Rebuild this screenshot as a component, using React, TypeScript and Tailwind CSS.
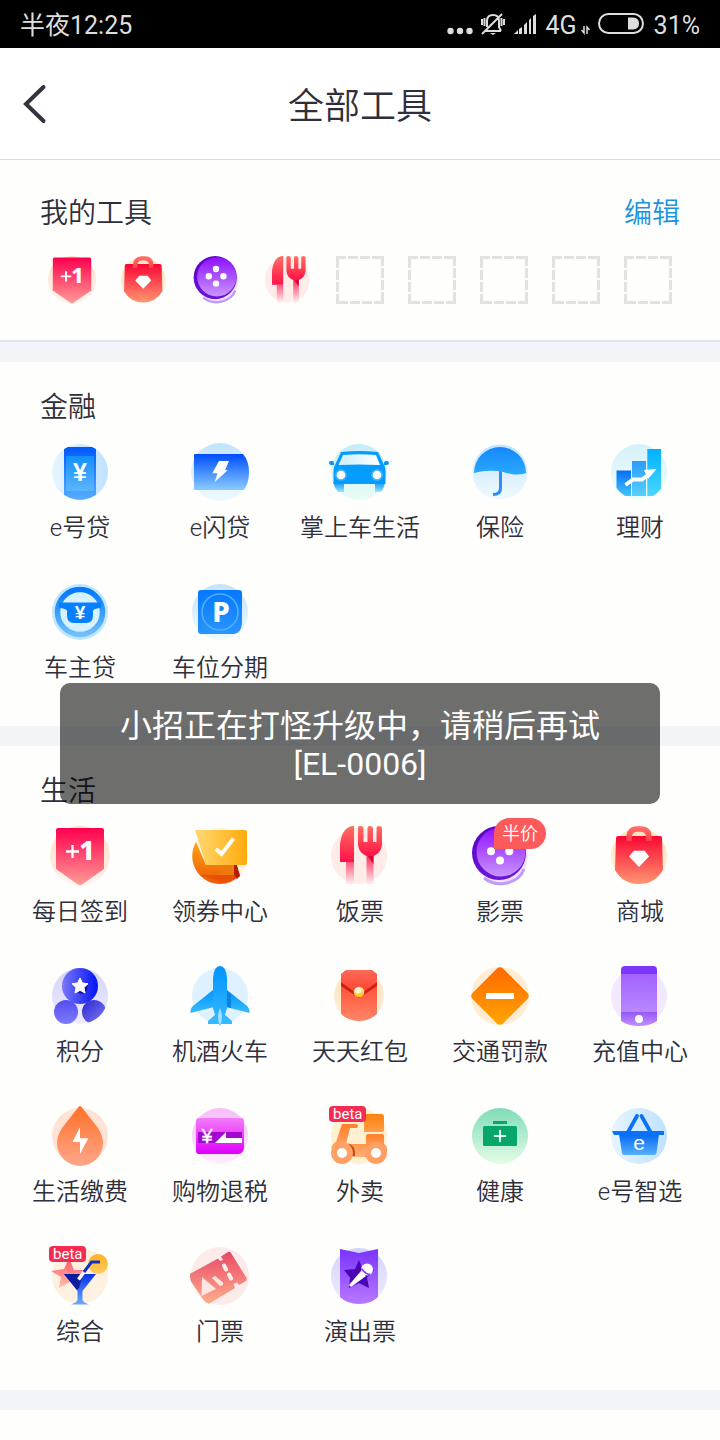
import React from 'react';

type IconName =
  | 'phoneLoan' | 'flashLoan' | 'car' | 'umbrella' | 'chart' | 'wheel' | 'parking'
  | 'sign' | 'coupon' | 'food' | 'movie' | 'bag' | 'points' | 'plane' | 'redPacket'
  | 'fine' | 'recharge' | 'drop' | 'refund' | 'scooter' | 'health' | 'basket'
  | 'cocktail' | 'ticket' | 'show';

interface Tool {
  icon: IconName;
  label: string;
  beta?: boolean;
  tag?: string;
}

const financeTools: Tool[] = [
  { icon: 'phoneLoan', label: 'e号贷' },
  { icon: 'flashLoan', label: 'e闪贷' },
  { icon: 'car', label: '掌上车生活' },
  { icon: 'umbrella', label: '保险' },
  { icon: 'chart', label: '理财' },
  { icon: 'wheel', label: '车主贷' },
  { icon: 'parking', label: '车位分期' },
];

const lifeTools: Tool[] = [
  { icon: 'sign', label: '每日签到' },
  { icon: 'coupon', label: '领券中心' },
  { icon: 'food', label: '饭票' },
  { icon: 'movie', label: '影票', tag: '半价' },
  { icon: 'bag', label: '商城' },
  { icon: 'points', label: '积分' },
  { icon: 'plane', label: '机酒火车' },
  { icon: 'redPacket', label: '天天红包' },
  { icon: 'fine', label: '交通罚款' },
  { icon: 'recharge', label: '充值中心' },
  { icon: 'drop', label: '生活缴费' },
  { icon: 'refund', label: '购物退税' },
  { icon: 'scooter', label: '外卖', beta: true },
  { icon: 'health', label: '健康' },
  { icon: 'basket', label: 'e号智选' },
  { icon: 'cocktail', label: '综合', beta: true },
  { icon: 'ticket', label: '门票' },
  { icon: 'show', label: '演出票' },
];

const myTools: Tool[] = [
  { icon: 'sign', label: '每日签到' },
  { icon: 'bag', label: '商城' },
  { icon: 'movie', label: '影票' },
  { icon: 'food', label: '饭票' },
];

const EMPTY_SLOTS = 5;

// id, from, to, direction (v = top to bottom, h = left to right, d = diagonal)
const gradients: [string, string, string, 'v' | 'h' | 'd'][] = [
  ['paleBlue', '#e6f5ff', '#bfe2ff', 'h'],
  ['paleBlueV', '#c3e4fd', '#f0faff', 'v'],
  ['paleCyan', '#c4ecfb', '#e9fdf6', 'v'],
  ['blueFade', '#0057ff', '#62baff', 'v'],
  ['screen', '#1290fb', '#5cb4fd', 'v'],
  ['blueCard', '#004dff', '#8accff', 'v'],
  ['tyre', '#0596fa', '#9fe6fb', 'v'],
  ['windshield', '#cbeefe', '#ffffff', 'h'],
  ['dome', '#1688fb', '#29a9ff', 'v'],
  ['bar1', '#0a6cf2', '#3fc8ff', 'v'],
  ['bar2', '#2b9dfb', '#58cfff', 'v'],
  ['bar3', '#00b2ff', '#4ad6ff', 'v'],
  ['ring', '#0078ff', '#71c0fb', 'v'],
  ['park', '#0478ff', '#2b94ff', 'v'],
  ['peach', '#ffdcc0', '#fff5f2', 'v'],
  ['badge', '#ff004e', '#ff9d97', 'v'],
  ['couponBase', '#ffa412', '#ee5a06', 'v'],
  ['couponCard', '#ffd873', '#ffab0a', 'h'],
  ['blade', '#ff6f61', '#ff1249', 'v'],
  ['handle', '#ff1f55', '#fff0ee', 'v'],
  ['violetDark', '#5a05c4', '#6a14d8', 'v'],
  ['violetDisc', '#8f10ff', '#c994ff', 'v'],
  ['bagBody', '#fa0634', '#ff9670', 'v'],
  ['bagArch', '#ff6a67', '#fb3f4b', 'v'],
  ['sand', '#ffe3bb', '#fff1dd', 'v'],
  ['ballBig', '#7b78f6', '#0212f4', 'h'],
  ['ballSmall', '#544df0', '#7f7bff', 'v'],
  ['ballCut', '#2c27c9', '#7f7bff', 'd'],
  ['paleIndigo', '#d3d3fb', '#eeedff', 'v'],
  ['planeFill', '#0093ff', '#37bcff', 'v'],
  ['packet', '#ff3a25', '#ff8b6b', 'v'],
  ['flap', '#ff6a57', '#fb4231', 'v'],
  ['gold', '#ffe9a0', '#ffbe12', 'v'],
  ['diamond', '#ff6a00', '#ffa400', 'v'],
  ['cellTop', '#a262ff', '#b888ff', 'v'],
  ['cellFoot', '#9656f8', '#c290ff', 'v'],
  ['dropFill', '#fe7027', '#ffa78a', 'v'],
  ['palePink', '#f7bdfb', '#fdeefe', 'v'],
  ['magenta', '#f57cfb', '#dd00fa', 'v'],
  ['crate', '#ff8209', '#ff9d4c', 'v'],
  ['scoot', '#ff7f2a', '#ffb178', 'v'],
  ['green', '#7fdcb8', '#e6fce6', 'v'],
  ['basketFill', '#0568f4', '#55b0ff', 'v'],
  ['starFill', '#ff5468', '#ffc2ac', 'v'],
  ['orange', '#ffb21f', '#ffcb62', 'v'],
  ['glass', '#0a31e8', '#6aaaff', 'v'],
  ['ticketFill', '#e84a66', '#ffb08e', 'v'],
  ['flag', '#7a34fb', '#b878ff', 'v'],
];

const IconDefs = () => (
  <svg width="0" height="0" className="absolute" aria-hidden="true">
    <defs>
      {gradients.map(([id, from, to, dir]) => (
        <linearGradient key={id} id={id} x1="0" y1="0" x2={dir === 'v' ? '0' : '1'} y2={dir === 'h' ? '0' : '1'}>
          <stop stopColor={from} />
          <stop offset="1" stopColor={to} />
        </linearGradient>
      ))}
      <clipPath id="disc"><circle cx="30" cy="30" r="28" /></clipPath>
      <clipPath id="discPacket"><circle cx="29" cy="28" r="27" /></clipPath>
      <clipPath id="discBig"><circle cx="30" cy="30" r="30" /></clipPath>
    </defs>
  </svg>
);

const glyphFont = "'Noto Sans', sans-serif";
const yenFont = "'Liberation Sans', sans-serif";

const icons: Record<IconName, React.ReactNode> = {
  phoneLoan: (
    <>
      <circle cx="30" cy="30" r="28" fill="url(#paleBlue)" />
      <g clipPath="url(#disc)">
        <rect x="14" y="5" width="32" height="60" rx="3" fill="url(#blueFade)" />
        <rect x="16" y="14" width="28" height="35" fill="url(#screen)" />
      </g>
      <text x="30" y="39" fontFamily={yenFont} fontSize="25" fontWeight="700" fill="#fff" textAnchor="middle">¥</text>
    </>
  ),
  flashLoan: (
    <>
      <circle cx="30" cy="30" r="29" fill="url(#paleBlueV)" />
      <path d="M5 12H53Q59 19 59 30T54 48H5Q4 48 4 47V13Q4 12 5 12Z" fill="url(#blueCard)" />
      <path d="M29 19H39L35 28.3H37.7L24.5 40.3L27.5 31.3H22.3Z" fill="#fff" />
    </>
  ),
  car: (
    <>
      <circle cx="29" cy="30" r="28" fill="url(#paleCyan)" />
      <path d="M3.5 40H14V50H8Q5 47 3.5 41ZM45 40H55Q54 47 51 50H45Z" fill="url(#tyre)" />
      <path d="M-1 21Q-1 19 1 19H2Q4 19 4 21V23H1Q-1 23 -1 21ZM54 21Q54 19 56 19H57Q59 19 59 21T57 23H54Z" fill="#0596fa" />
      <path d="M11 10Q29 8 48 10L54 23Q55.5 25 55.5 30V42H3.5V30Q3.5 25 5 23Z" fill="#059cfd" />
      <path d="M13 13Q29 11.5 46 13L50 23Q29 22 8.5 23Z" fill="url(#windshield)" />
      <circle cx="11" cy="33" r="6" fill="#5cc0ff" opacity=".6" />
      <circle cx="47" cy="33" r="6" fill="#5cc0ff" opacity=".6" />
      <circle cx="11" cy="33" r="4.3" fill="#fff" />
      <circle cx="47" cy="33" r="4.3" fill="#fff" />
    </>
  ),
  umbrella: (
    <>
      <circle cx="30" cy="30" r="27.5" fill="url(#paleBlueV)" />
      <path d="M30.5 28V46Q30.5 52.5 23 52.5" fill="none" stroke="#2d8cf5" strokeWidth="3" />
      <path d="M4 31A26 26 0 0 1 56 31Q51 33 44 32.5Q38 31.5 33 30Q27 28.5 20 28.7Q10 29 4 31Z" fill="url(#dome)" />
    </>
  ),
  chart: (
    <>
      <circle cx="29" cy="30" r="28" fill="url(#paleCyan)" opacity=".7" />
      <path d="M6.5 28.5H21V54H15Q9 50 6.5 46Z" fill="url(#bar1)" />
      <path d="M22 19H36V54H22Z" fill="url(#bar2)" />
      <path d="M37.3 7H51V47Q47 52 43 54H37.3Z" fill="url(#bar3)" />
      <path d="M15.5 43L23 37.5H32L41 31" fill="none" stroke="#fff" strokeWidth="4" />
      <path d="M34 28L46.5 27L38 37Z" fill="#fff" />
    </>
  ),
  wheel: (
    <>
      <circle cx="30" cy="30" r="28" fill="#c2e7fc" />
      <circle cx="30" cy="30" r="22.5" fill="#d6f1ff" stroke="url(#ring)" strokeWidth="5.5" />
      <path d="M9 20.5H51V26Q45 26 43 28.5V33Q43 41 36 41H24Q17 41 17 33V28.5Q15 26 9 26Z" fill="#0680ff" />
      <text x="30" y="37" fontFamily={yenFont} fontSize="19" fontWeight="700" fill="#fff" textAnchor="middle">¥</text>
    </>
  ),
  parking: (
    <>
      <circle cx="30" cy="30" r="28" fill="url(#paleBlueV)" />
      <path d="M11 8H49Q52 8 52 11V42Q51 51 44 52H11Q8 52 8 49V11Q8 8 11 8Z" fill="url(#park)" />
      <circle cx="30" cy="30" r="18" fill="none" stroke="#4fb0fc" strokeWidth="1.6" />
      <text x="31" y="40" fontFamily={glyphFont} fontSize="28" fontWeight="800" fill="#fff" textAnchor="middle">P</text>
    </>
  ),
  sign: (
    <>
      <circle cx="30" cy="30" r="30" fill="url(#peach)" />
      <path d="M8 2H52Q54 2 54 4V43L32 58.5Q30 60 28 58.5L6 43V4Q6 2 8 2Z" fill="url(#badge)" />
      <path d="M16 25.5H29M22.5 19V32" stroke="#fff" strokeWidth="2.4" />
      <text x="37" y="34" fontFamily={glyphFont} fontSize="27" fontWeight="800" fill="#fff" textAnchor="middle">1</text>
    </>
  ),
  coupon: (
    <>
      <circle cx="30" cy="30" r="28" fill="#fff3df" />
      <path d="M6 16L16 39H46L50 49Q42 58 30 58A28 28 0 0 1 6 16Z" fill="url(#couponBase)" />
      <path d="M16 39H46L44 49H27Q42 46 20 41Z" fill="#ef7a0b" />
      <path d="M10 49H44L48 51Q40 57 31 56Z" fill="#e85005" />
      <path d="M44 39H47L50 50L47 53L44 49Z" fill="#b51c03" />
      <path d="M5 4H55Q57 4 57 6V37Q57 39 55 39H16Z" fill="url(#couponCard)" />
      <path d="M26 23L31.5 28L43.5 12.5" fill="none" stroke="#fff" strokeWidth="3.8" />
    </>
  ),
  food: (
    <>
      <circle cx="29" cy="30" r="28" fill="#ffebe8" />
      <path d="M16 36H24V58H16ZM36.5 28H43.5V58H36.5Z" fill="url(#handle)" />
      <path d="M10 36V18Q12 2 22 0H24V36Z" fill="url(#blade)" />
      <path d="M36.5 28H43.5V38Z" fill="#d5052f" />
      <path d="M30 0Q33.5 0 33.5 2V16H37.5V2Q37.5 0 40 0T43 2V16H46.5V2Q46.5 0 49 0T52 2V19Q51 27 43.5 30H36.5Q29 27 28 19V2Q28 0 30 0Z" fill="url(#blade)" />
    </>
  ),
  movie: (
    <>
      <circle cx="31" cy="30" r="27" fill="#efe4ff" />
      <path d="M14 52Q24 60 37 57T54 43" fill="none" stroke="#c09cfa" strokeWidth="3" />
      <circle cx="29" cy="27" r="27" fill="url(#violetDark)" />
      <circle cx="31" cy="26" r="24.5" fill="url(#violetDisc)" />
      <circle cx="30" cy="16.3" r="4" fill="#fff" />
      <circle cx="21" cy="25.3" r="4" fill="#fff" />
      <circle cx="39.3" cy="25.3" r="4" fill="#fff" />
      <circle cx="30" cy="34.5" r="4" fill="#fff" />
    </>
  ),
  bag: (
    <>
      <circle cx="29" cy="30" r="28" fill="url(#sand)" />
      <path d="M8 10H50Q52 10 52 12L53 44Q45 58 29 58T5 44L6 12Q6 10 8 10Z" fill="url(#bagBody)" />
      <path d="M19 15V12Q19 3 27 3H31Q39 3 39 12V15" fill="none" stroke="url(#bagArch)" strokeWidth="5.5" />
      <path d="M24 24.7H34.7L39 30.5L29 41L19 30.5Z" fill="#fff" />
    </>
  ),
  points: (
    <>
      <circle cx="30" cy="30" r="28" fill="url(#paleIndigo)" />
      <circle cx="30" cy="20" r="18" fill="url(#ballBig)" />
      <circle cx="16" cy="46" r="12" fill="url(#ballSmall)" />
      <circle cx="44" cy="46" r="12" fill="url(#ballCut)" clipPath="url(#disc)" />
      <path d="M28 27L37 16Q39 25 33 28Z" fill="#0c0cae" />
      <path d="M30 12L32.4 17L38 17.7L34 21.5L35 27L30 24.3L25 27L26 21.5L22 17.7L27.6 17Z" fill="#fff" stroke="#fff" strokeLinejoin="round" />
    </>
  ),
  plane: (
    <>
      <circle cx="30" cy="30" r="28" fill="#dff1ff" />
      <path d="M23 24L3 40Q0 43 0.5 47L24 41H36L59.5 47Q60 43 57 40L37 24Z" fill="url(#planeFill)" />
      <path d="M37 25L41 28V42L37 41Z" fill="#0b81e6" />
      <path d="M23 12Q24 0 30 0T37 12V42L35 49L42 55V58H31L30 60L29 58H18V55L25 49L23 42Z" fill="url(#planeFill)" />
      <path d="M30 42Q34 51 30 60Q26 51 30 42Z" fill="#a5dfff" />
    </>
  ),
  redPacket: (
    <>
      <circle cx="29" cy="30" r="25" fill="url(#sand)" />
      <g clipPath="url(#discPacket)">
        <rect x="11" y="4" width="36" height="54" rx="4" fill="url(#packet)" />
        <path d="M11 16L29 29L47 16V20L29 32L11 20Z" fill="#cf1f17" />
        <path d="M11 16V8Q11 4 15 4H43Q47 4 47 8V16L31 27H27Z" fill="url(#flap)" />
      </g>
      <circle cx="29" cy="26" r="5.3" fill="url(#gold)" />
      <circle cx="28" cy="24.5" r="3" fill="#fff6dc" />
    </>
  ),
  fine: (
    <>
      <circle cx="30" cy="30" r="29" fill="#ffecd2" />
      <path d="M27 2.500Q30 0 33 2.5L57.500 27Q60 30 57.500 33L33 57.500Q30 60 27 57.500L2.500 33Q0 30 2.500 27Z" fill="url(#diamond)" />
      <path d="M16 27H44V33H16Z" fill="#fff" />
    </>
  ),
  recharge: (
    <>
      <circle cx="29" cy="30" r="28" fill="#f3e8ff" />
      <path d="M11 8V4Q11 0 15 0H43Q47 0 47 4V8Z" fill="#7d36fb" />
      <path d="M11 8H47V46H11Z" fill="url(#cellTop)" />
      <path d="M11 46H47V55Q40 60 29 60T11 55Z" fill="url(#cellFoot)" />
      <circle cx="29" cy="53" r="4" fill="#fff" />
    </>
  ),
  drop: (
    <>
      <circle cx="30" cy="30" r="28" fill="#ffe2d6" />
      <path d="M28.5 1Q30 -1 31.5 1L48 22Q53 30 53 37A23 23 0 0 1 7 37Q7 30 12 22Z" fill="url(#dropFill)" />
      <path d="M30 21.3V32.3H38.3L30 48V36H22.5Z" fill="#fff" />
    </>
  ),
  refund: (
    <>
      <circle cx="30" cy="30" r="28" fill="url(#palePink)" />
      <path d="M9 12H51Q54 12 54 15V42Q53 47 49 48H9Q6 48 6 45V15Q6 12 9 12Z" fill="url(#magenta)" />
      <path d="M8 26H52V37H8Z" fill="#a308cf" />
      <text x="17" y="37" fontFamily={yenFont} fontSize="20" fontWeight="400" fill="#fff" stroke="#fff" strokeWidth=".4" textAnchor="middle">¥</text>
      <path d="M25 37L36 26V32H52V37Z" fill="#fff" />
    </>
  ),
  scooter: (
    <>
      <circle cx="29" cy="30" r="28" fill="#fff0d2" />
      <path d="M36 8H51Q54 8 54 11V24Q54 26 52 26H34V10Q34 8 36 8Z" fill="url(#crate)" />
      <path d="M12 18H26Q28 18 28 20T26 22H20L16 38H22L26 50H10L1 42Q3 37 6 36Z" fill="url(#scoot)" />
      <path d="M38 28H52Q54 28 54 30V38Q58 40 57 46L46 51H22V38H36V30Q36 28 38 28Z" fill="url(#scoot)" />
      <path d="M18 37Q26 40 25 50H20Q24 43 18 37Z" fill="#b94a0c" />
      <circle cx="12" cy="47" r="8" fill="#fff" stroke="#ffa064" strokeWidth="6" />
      <circle cx="46" cy="47" r="8" fill="#fff" stroke="#ffa064" strokeWidth="6" />
    </>
  ),
  health: (
    <>
      <circle cx="30" cy="30" r="28" fill="url(#green)" />
      <path d="M23 15H37V18H23Z" fill="#07a66b" />
      <rect x="13" y="20" width="34" height="20" rx="1.5" fill="#07a66b" />
      <path d="M24 30H36M30 24V36" stroke="#e6fff4" strokeWidth="2" />
    </>
  ),
  basket: (
    <>
      <circle cx="29" cy="30" r="28" fill="url(#paleBlue)" />
      <path d="M17.5 27L27 10M41 27L31.5 10" stroke="#0a72fa" strokeWidth="3.8" strokeLinecap="round" />
      <path d="M9 28H49L46.5 47Q46 49 44 49H14Q12 49 12 47Z" fill="url(#basketFill)" />
      <path d="M2 25H54V29H4Z" fill="#0a72fa" />
      <text x="29" y="44" fontFamily={yenFont} fontSize="21" fontWeight="400" fill="#fff" textAnchor="middle">e</text>
    </>
  ),
  cocktail: (
    <>
      <circle cx="30" cy="30" r="28" fill="#fff1e2" />
      <path d="M19 12L24 24H37L28 32L31 41L20 36L9 42L11 31L1 25L14 23Z" fill="url(#starFill)" />
      <circle cx="48" cy="18" r="10" fill="url(#orange)" />
      <path d="M14 28H46L32.5 45V54Q33 56 39 58.5H21Q27 56 27.5 54V45Z" fill="url(#glass)" />
      <path d="M14 28H33L29 42L27 44Z" fill="#0c1c9c" />
      <path d="M28.5 33.5L34 26" stroke="#fff" strokeWidth="3.5" />
      <path d="M34 26L41.5 16H50" fill="none" stroke="#1330c8" strokeWidth="3" />
    </>
  ),
  ticket: (
    <>
      <circle cx="30" cy="30" r="29" fill="#fdebea" />
      <g clipPath="url(#discBig)">
        <path d="M-3 29.5L28 12.5L30 15L33 14L31 10.5L38 6Q40 5 41 7L56.5 32Q57 34 56 35L49 39L47 36.5L43.5 38L45 42L17 59Z" fill="url(#ticketFill)" />
      </g>
      <path d="M34 19.5L36 23.5M39 28.5L41 32.5" stroke="#ffeceb" strokeWidth="4" strokeLinecap="round" />
      <path d="M12 31L26 43L11.5 50Z" fill="#ffe6e2" />
      <path d="M22 32L25 30L33 36.5L33 39L30 40Z" fill="#ffe6e2" />
    </>
  ),
  show: (
    <>
      <circle cx="29" cy="30" r="28" fill="url(#paleIndigo)" />
      <path d="M10 3L29 7L48 3V51Q41 58 29 58T10 51Z" fill="url(#flag)" />
      <path d="M29 14L32.5 23L44 24L37 31.5L39 42L29 37L19 42L20 31.5L14 24L25 23Z" fill="#4b05b4" />
      <path d="M31 25L36 30L21 41L19 39Z" fill="#fff" />
      <circle cx="37" cy="23.5" r="6" fill="#fff" />
      <path d="M31.5 22.5Q35 28 40 28.5" fill="none" stroke="#7b35f5" strokeWidth="1.5" />
    </>
  ),
};

const ToolIcon: React.FC<{ name: IconName; className: string }> = ({ name, className }) => (
  <svg viewBox="0 0 60 60" className={`overflow-visible ${className}`} aria-hidden="true">{icons[name]}</svg>
);

const StatusBar = () => (
  <div className="flex h-12 items-center justify-between bg-black px-5 text-[25px] leading-8 font-normal text-[#dedede]">
    <span className="pt-1">半夜12:25</span>
    <div className="flex items-center gap-2">
      <svg width="26" height="24" viewBox="0 0 26 24" fill="currentColor" aria-hidden="true">
        <circle cx="3.5" cy="19" r="3.2" />
        <circle cx="13" cy="19" r="3.2" />
        <circle cx="22.5" cy="19" r="3.2" />
      </svg>
      <svg width="24" height="24" viewBox="0 0 24 24" fill="none" stroke="currentColor" strokeWidth="2" aria-hidden="true">
        <path d="M4 19H20M6 15V9Q6 3 12 3T18 9V15L20 19M1 22L21 2M1 7V13M3.5 6V14M20.5 6V14M23 7V13" />
        <path d="M9 21H15L12 23Z" fill="currentColor" stroke="none" />
      </svg>
      <svg width="24" height="24" viewBox="0 0 24 24" fill="currentColor" aria-hidden="true">
        <path d="M1 22L5 18V22ZM6 17L9 15V22H6ZM11 13L14 10V22H11ZM16 8L18 6V22H16ZM20 4L23 2V22H20Z" />
      </svg>
      <span className="flex items-end gap-1 pt-1">
        4G
        <svg width="9" height="24" viewBox="0 0 9 24" fill="none" stroke="currentColor" strokeWidth="1.5" aria-hidden="true">
          <path d="M3 8V15L0.5 12M6 16V9L8.5 12" />
        </svg>
      </span>
      <svg width="46" height="22" viewBox="0 0 46 22" aria-hidden="true">
        <rect x="1" y="1" width="44" height="19" rx="9.5" fill="none" stroke="currentColor" strokeWidth="2" />
        <path d="M30 4.5H35Q41 5 41 10.5T35 16.5H30Z" fill="currentColor" />
      </svg>
      <span className="pt-1 pl-0.5">31%</span>
    </div>
  </div>
);

const EmptySlot = () => (
  <svg width="48" height="48" viewBox="0 0 48 48" aria-hidden="true">
    <path d="M0 1.5H48M46.5 0V48M48 46.5H0M1.5 48V0" fill="none" stroke="#e2e2e2" strokeWidth="3" strokeDasharray="10 2" />
  </svg>
);

const ToolItem: React.FC<{ tool: Tool }> = ({ tool }) => (
  <button type="button" className="flex h-[140px] flex-col items-center gap-2.5 pt-3.5">
    <span className="relative block">
      <ToolIcon name={tool.icon} className="size-[60px]" />
      {tool.beta && (
        <span className="absolute -left-px top-0 rounded-sm bg-[#f52b51] px-1 text-[15px] leading-4 font-normal text-white">beta</span>
      )}
      {tool.tag && (
        <span className="absolute left-6 -top-2 rounded-full rounded-bl-sm bg-[#fd5a5b] px-2 pt-px text-lg leading-[30px] whitespace-nowrap text-white">
          {tool.tag}
        </span>
      )}
    </span>
    <span className="text-2xl leading-8 whitespace-nowrap">{tool.label}</span>
  </button>
);

const ToolSection: React.FC<{ title: string; tools: Tool[] }> = ({ title, tools }) => (
  <section className="border-b-20 border-[#f1f5f9] pt-[26px] pb-[18px]">
    <h2 className="px-10 text-[28px] leading-10">{title}</h2>
    <div className="grid grid-cols-5 px-2.5">
      {tools.map(tool => <ToolItem key={tool.label} tool={tool} />)}
    </div>
  </section>
);

const App: React.FC = () => (
  <div className="relative min-h-screen bg-[#fefefd] font-['Roboto','Noto_Sans_CJK_SC',sans-serif] font-[350] text-[#2f2f3b]">
    <IconDefs />
    <StatusBar />

    <header className="grid h-28 grid-cols-[80px_1fr_80px] items-center border-b border-[#dcdcde] bg-white">
      <button type="button" aria-label="返回" className="flex h-full items-center pl-5">
        <svg width="28" height="44" viewBox="0 0 28 44" fill="none" stroke="#33333f" strokeWidth="4" strokeLinecap="round" aria-hidden="true">
          <path d="M23.5 5L6 22L23.5 39" />
        </svg>
      </button>
      <h1 className="pt-1.5 text-center text-4xl font-[350]">全部工具</h1>
    </header>

    <main>
      <section className="border-b-2 border-[#dde3e6] pt-[34px] pb-9">
        <div className="flex items-center justify-between px-10 text-[28px] leading-10">
          <h2>我的工具</h2>
          <button type="button" className="text-[#1b93e1]">编辑</button>
        </div>
        <div className="mt-[22px] grid grid-cols-9 justify-items-center px-9">
          {myTools.map(tool => (
            <button key={tool.label} type="button" aria-label={tool.label}>
              <ToolIcon name={tool.icon} className="size-12" />
            </button>
          ))}
          {Array.from({ length: EMPTY_SLOTS }, (_, i) => <EmptySlot key={i} />)}
        </div>
      </section>
      <div className="h-5 bg-[#f1f5f9]" />
      <ToolSection title="金融" tools={financeTools} />
      <ToolSection title="生活" tools={lifeTools} />
    </main>

    {/* toast */}
    <div role="status" className="absolute inset-x-15 top-[683px] rounded-[10px] bg-black/57 px-6 pt-6 pb-[21px] text-center text-[32px] leading-[38px] font-normal text-white">
      小招正在打怪升级中，请稍后再试
      <br />
      [EL-0006]
    </div>
  </div>
);

export default App;
